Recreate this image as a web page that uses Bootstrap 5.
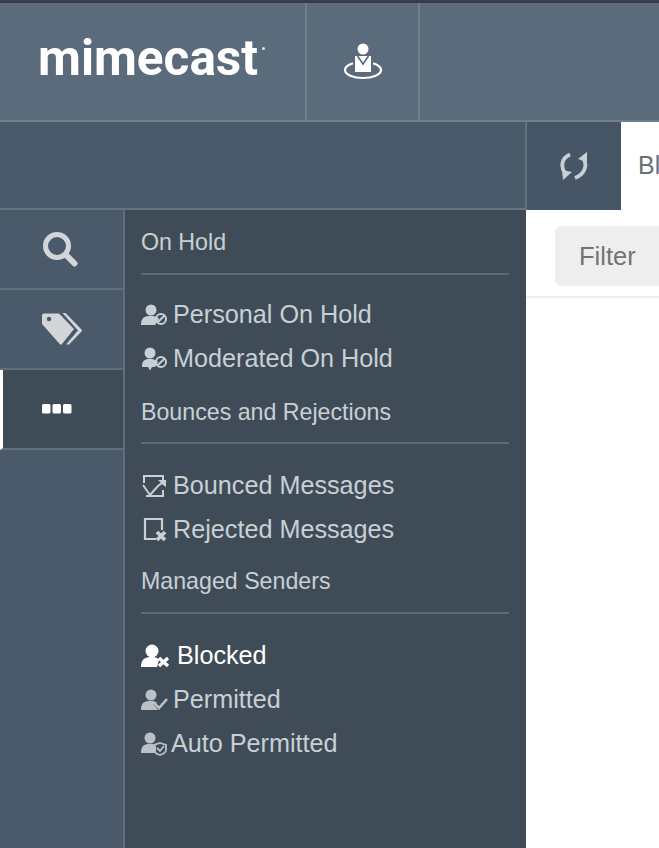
<!DOCTYPE html>
<html lang="en"><head><meta charset="utf-8"><title>Mimecast</title>
<link href="https://cdn.jsdelivr.net/npm/bootstrap@5.3.0/dist/css/bootstrap.min.css" rel="stylesheet">
<style>
html,body{height:848px;overflow:hidden;background:#fff}
body{font-family:"Liberation Sans",Arial,sans-serif;color:#c8d0d6}
.strip{height:3px;background:#383d4c}
.hdr{height:119px;background:#5a6b7c;border-bottom:2px solid #6f7f8d}
.logo-cell{width:307px;flex:none;border-right:2px solid #6f7f8d;padding-left:38px}
.logo-txt{font-family:Roboto,sans-serif;font-weight:700;font-size:49.5px;line-height:1;color:#fff;letter-spacing:0;padding-bottom:5px}
.tm-dot{width:3px;height:3px;background:#dfe4e8;margin:0 0 26px 4px;border-radius:50%}
.geo-cell{width:113px;flex:none;border-right:2px solid #6f7f8d}
.bar2{height:88px;background:#4a5a6b}
.bar-fill{width:527px;flex:none;border-right:2px solid #64747f;border-bottom:2px solid #64747f}
.sync-cell{width:94px;flex:none;background:#465667}
.tab-cell{background:#fff;padding-left:17px;flex:1;overflow:hidden;white-space:nowrap;font-size:25px;color:#6b7075}
.main{height:638px}
.side{width:125px;flex:none;background:#4a5a6b;border-right:2px solid #5f6f7e}
.side-item{height:80px;border-bottom:2px solid #5f6f7e}
.side-find{padding-right:3px}
.side-on{height:80px;background:#3f4c57;border-left:3px solid #fff;border-bottom:2px solid #5f6f7e;padding-right:13px}
.menu-col{width:401px;flex:none;background:#3f4c57;padding:0 17px 0 16px}
.sec-head{font-size:23.2px;line-height:26px;color:#c8d0d6;height:26px;white-space:nowrap}
.sh1{margin-top:19px;margin-bottom:18px}
.sh2{margin-top:18px;margin-bottom:17px}
.sh3{margin-top:16px;margin-bottom:18px}
.sec-line{height:2px;background:#5d6a75}
.m-item{height:44px;font-size:25.2px;color:#c8d0d6;white-space:nowrap}
.m-item svg{flex:none}
.first-i{margin-top:18px}
.first-j{margin-top:20px}
.m-on{color:#fff;gap:7px}
.pane{flex:1;background:#fff;padding-top:16px;overflow:hidden}
.pane-top{height:72px;border-bottom:2px solid #eee;padding-left:29px}
.filter-box{background:#eeeeee;border-radius:6px;height:60px;width:140px;padding-left:24px;font-size:25.5px;color:#6f7478}
</style></head><body>
<div class="strip"></div>
<div class="hdr d-flex">
 <div class="logo-cell d-flex align-items-center"><span class="logo-txt">mimecast</span><span class="tm-dot"></span></div>
 <div class="geo-cell d-flex align-items-center justify-content-center">
  <svg width="40" height="38" viewBox="0 0 40 38"><ellipse cx="20" cy="27" rx="18" ry="8" fill="none" stroke="#fff" stroke-width="2.2"/><path d="M10 12h20v20H10z" fill="#5a6b7c"/><circle cx="20" cy="6" r="5.5" fill="#fff"/><path d="M12 13h16v16H12z" fill="#fff"/><path d="M14.5 13l5.5 8 5.5-8" fill="none" stroke="#5a6b7c" stroke-width="1.6"/></svg>
 </div>
</div>
<div class="bar2 d-flex">
 <div class="bar-fill"></div>
 <div class="sync-cell d-flex align-items-center justify-content-center">
  <svg width="28" height="28" viewBox="0 0 28 28" fill="none" stroke="#c8d0d6" stroke-width="3.8"><path d="M10 2.5C2 6 0 14 5 21"/><path d="M15 26C25 22 28 13 23 6"/><path d="M2 18l10 2-9 8z" fill="#c8d0d6" stroke="none"/><path d="M27 0v10l-9-3z" fill="#c8d0d6" stroke="none"/></svg>
 </div>
 <div class="tab-cell d-flex align-items-center">Blocked</div>
</div>
<div class="main d-flex">
 <div class="side">
  <div class="side-item side-find d-flex align-items-center justify-content-center">
   <svg width="36" height="36" viewBox="0 0 36 36" fill="none" stroke="#d2d6d9" stroke-linecap="round"><circle cx="15" cy="15" r="11.5" stroke-width="5"/><path d="M24 24l8.5 8.5" stroke-width="6"/></svg>
  </div>
  <div class="side-item d-flex align-items-center justify-content-center">
   <svg width="40" height="34" viewBox="0 0 40 34"><path d="M0 3.5A2 2 0 0 1 2 1.5H17L32 17 20 32a1.5 1.5 0 0 1-2.3 0L0 12z" fill="#d2d6d9"/><circle cx="7" cy="7" r="2.2" fill="#4a5a6b"/><path d="M20.5 1h3L39.5 17.5a1.5 1.5 0 0 1 0 2L27 32.5h-3L36 18.5z" fill="#d2d6d9"/></svg>
  </div>
  <div class="side-on d-flex align-items-center justify-content-center">
   <svg width="30" height="10" viewBox="0 0 30 10" fill="#fff"><rect x="0" y="0" width="8.5" height="9.5" rx="1.5"/><rect x="10.5" y="0" width="8.5" height="9.5" rx="1.5"/><rect x="21" y="0" width="8.5" height="9.5" rx="1.5"/></svg>
  </div>
 </div>
 <div class="menu-col">
  <div class="sec-head sh1">On Hold</div>
  <div class="sec-line"></div>
  <div class="m-item first-i d-flex align-items-center gap-1">
   <svg width="28" height="22" viewBox="0 0 28 22"><circle cx="10" cy="6" r="5.5" fill="#c8d0d6"/><path d="M0 21c0-8 4-9 10-9 5 0 7 1 8 3l-4 6z" fill="#c8d0d6"/><circle cx="20" cy="15" r="5" fill="none" stroke="#c8d0d6" stroke-width="2"/><path d="M16.5 18.5l7-7" stroke="#c8d0d6" stroke-width="2"/></svg>
   <span>Personal On Hold</span></div>
  <div class="m-item d-flex align-items-center gap-1">
   <svg width="28" height="24" viewBox="0 0 28 24"><circle cx="9" cy="6" r="5.5" fill="#c8d0d6"/><path d="M1 20c0-7 3-8 8-8s7 2 8 3l-3 5h-3l-2 3.500L7 20z" fill="#c8d0d6"/><circle cx="20" cy="15" r="5" fill="none" stroke="#c8d0d6" stroke-width="2"/><path d="M16.5 18.5l7-7" stroke="#c8d0d6" stroke-width="2"/></svg>
   <span>Moderated On Hold</span></div>
  <div class="sec-head sh2">Bounces and Rejections</div>
  <div class="sec-line"></div>
  <div class="m-item first-j d-flex align-items-center gap-1">
   <svg width="28" height="24" viewBox="0 0 28 24" fill="none" stroke="#c8d0d6" stroke-width="2"><path d="M3 9V2h19v5"/><path d="M22 16v6H5"/><path d="M2 11l7 10M9 21l8-9 4-3"/><path d="M17 6h8v7l-3-2z" fill="#c8d0d6" stroke="none"/></svg>
   <span>Bounced Messages</span></div>
  <div class="m-item d-flex align-items-center gap-1">
   <svg width="28" height="26" viewBox="0 0 28 26"><path d="M15 22H4V2h17v11" fill="none" stroke="#c8d0d6" stroke-width="2.2"/><path d="M16 15l8 8m0-8l-8 8" stroke="#c8d0d6" stroke-width="3.8"/></svg>
   <span>Rejected Messages</span></div>
  <div class="sec-head sh3">Managed Senders</div>
  <div class="sec-line"></div>
  <div class="m-item first-j m-on d-flex align-items-center">
   <svg width="29" height="24" viewBox="0 0 29 24"><circle cx="11" cy="7" r="6.5" fill="#fff"/><path d="M0 23c0-8 4-10 11-10 4 0 6 1 7 3l-2 7z" fill="#fff"/><path d="M18 14l9 8m0-8l-9 8" stroke="#fff" stroke-width="3.4"/></svg>
   <span>Blocked</span></div>
  <div class="m-item d-flex align-items-center gap-1">
   <svg width="28" height="22" viewBox="0 0 28 22"><circle cx="10" cy="6" r="5.5" fill="#b9c1c7"/><path d="M0 21c0-8 4-9 10-9 3 0 5 .5 6 2l-3 2 4 5z" fill="#b9c1c7"/><path d="M14 15l4 4 8-9" fill="none" stroke="#b9c1c7" stroke-width="2.6"/></svg>
   <span>Permitted</span></div>
  <div class="m-item d-flex align-items-center gap-0">
   <svg width="30" height="24" viewBox="0 0 30 24"><circle cx="9" cy="6" r="5.5" fill="#b9c1c7"/><path d="M0 21c0-8 4-9 9-9 3 0 5 .5 6 2v7z" fill="#b9c1c7"/><path d="M19 11l6 2v5c0 2-3 4-6 5-3-1-6-3-6-5v-5z" fill="none" stroke="#b9c1c7" stroke-width="1.8"/><path d="M16 16l3 3 4-5" fill="none" stroke="#b9c1c7" stroke-width="1.8"/></svg>
   <span>Auto Permitted</span></div>
 </div>
 <div class="pane">
  <div class="pane-top"><div class="filter-box d-flex align-items-center">Filter</div></div>
 </div>
</div>
</body></html>
